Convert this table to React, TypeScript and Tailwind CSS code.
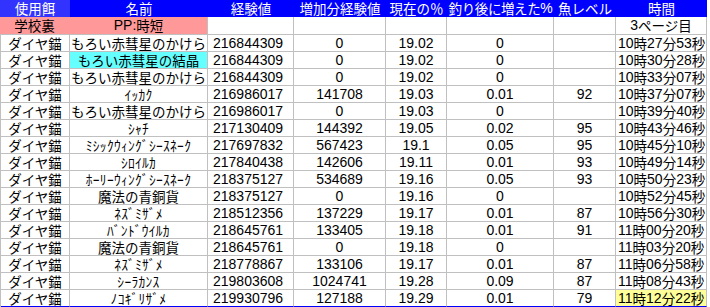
import React from "react";

const RE = /([\u3000-\u30ff\u3400-\u9fff\uff00-\uffef]+)/;
const HW = /^[\uff61-\uff9f]+$/;

function Txt({ s }: { s: string }) {
  const parts = s.split(RE).filter((p) => p !== "");
  return (
    <>
      {parts.map((p, i) =>
        RE.test(p) ? (
          <span
            key={i}
            className={`inline-block h-[15px] leading-[15px] font-['Noto_Sans_CJK_JP',sans-serif] ${
              HW.test(p) ? "text-[13.5px] tracking-[0.3px]" : "text-[13.5px]"
            }`}
          >
            {p}
          </span>
        ) : (
          <span
            key={i}
            className="inline-block h-[15px] leading-[15px] font-['Liberation_Sans','Noto_Sans_CJK_JP',sans-serif] text-[14px]"
          >
            {p}
          </span>
        )
      )}
    </>
  );
}

type Row = {
  name: string;
  exp: string;
  inc: string;
  pct: string;
  up: string;
  lvl: string;
  time: string;
  cyan?: boolean;
  yellow?: boolean;
};

const rows: Row[] = [
  { name: "もろい赤彗星のかけら", exp: "216844309", inc: "0", pct: "19.02", up: "0", lvl: "", time: "10時27分53秒" },
  { name: "もろい赤彗星の結晶", exp: "216844309", inc: "0", pct: "19.02", up: "0", lvl: "", time: "10時30分28秒", cyan: true },
  { name: "もろい赤彗星のかけら", exp: "216844309", inc: "0", pct: "19.02", up: "0", lvl: "", time: "10時33分07秒" },
  { name: "ｲｯｶｸ", exp: "216986017", inc: "141708", pct: "19.03", up: "0.01", lvl: "92", time: "10時37分07秒" },
  { name: "もろい赤彗星のかけら", exp: "216986017", inc: "0", pct: "19.03", up: "0", lvl: "", time: "10時39分40秒" },
  { name: "ｼｬﾁ", exp: "217130409", inc: "144392", pct: "19.05", up: "0.02", lvl: "95", time: "10時43分46秒" },
  { name: "ﾐｼｯｸｳｨﾝｸﾞｼｰｽﾈｰｸ", exp: "217697832", inc: "567423", pct: "19.1", up: "0.05", lvl: "95", time: "10時45分10秒" },
  { name: "ｼﾛｲﾙｶ", exp: "217840438", inc: "142606", pct: "19.11", up: "0.01", lvl: "93", time: "10時49分14秒" },
  { name: "ﾎｰﾘｰｳｨﾝｸﾞｼｰｽﾈｰｸ", exp: "218375127", inc: "534689", pct: "19.16", up: "0.05", lvl: "93", time: "10時50分23秒" },
  { name: "魔法の青銅貨", exp: "218375127", inc: "0", pct: "19.16", up: "0", lvl: "", time: "10時52分45秒" },
  { name: "ﾈｽﾞﾐｻﾞﾒ", exp: "218512356", inc: "137229", pct: "19.17", up: "0.01", lvl: "87", time: "10時56分30秒" },
  { name: "ﾊﾞﾝﾄﾞｳｲﾙｶ", exp: "218645761", inc: "133405", pct: "19.18", up: "0.01", lvl: "91", time: "11時00分20秒" },
  { name: "魔法の青銅貨", exp: "218645761", inc: "0", pct: "19.18", up: "0", lvl: "", time: "11時03分20秒" },
  { name: "ﾈｽﾞﾐｻﾞﾒ", exp: "218778867", inc: "133106", pct: "19.17", up: "0.01", lvl: "87", time: "11時06分58秒" },
  { name: "ｼｰﾗｶﾝｽ", exp: "219803608", inc: "1024741", pct: "19.28", up: "0.09", lvl: "87", time: "11時08分43秒" },
  { name: "ﾉｺｷﾞﾘｻﾞﾒ", exp: "219930796", inc: "127188", pct: "19.29", up: "0.01", lvl: "79", time: "11時12分22秒", yellow: true },
];

const cell =
  "box-border h-full flex items-center whitespace-nowrap overflow-hidden border-r border-b border-[#c0c0c0]";

export default function App() {
  return (
    <div className="w-[710px] h-[307px] bg-white text-black overflow-hidden">
      {/* header */}
      <div className="flex h-[17px] text-white">
        <div className="w-[70px] h-full bg-[#3333ff] flex items-center justify-center">
          <Txt s="使用餌" />
        </div>
        <div className="w-[637px] h-full bg-[#0000ff] flex items-center">
          <div className="w-[138px] flex justify-center"><Txt s="名前" /></div>
          <div className="w-[86px] flex justify-center"><Txt s="経験値" /></div>
          <div className="w-[92px] flex justify-center"><Txt s="増加分経験値" /></div>
          <div className="w-[61px] flex justify-center"><Txt s="現在の％" /></div>
          <div className="w-[107px] flex justify-center whitespace-nowrap tracking-[-0.4px]"><Txt s="釣り後に増えた%" /></div>
          <div className="w-[62px] flex justify-center"><Txt s="魚レベル" /></div>
          <div className="w-[91px] flex justify-center"><Txt s="時間" /></div>
        </div>
      </div>

      {/* school row */}
      <div className="flex h-[18px]">
        <div className={`${cell} w-[70px] bg-[#ff9999] border-r-[#ff9999] justify-center`}>
          <Txt s="学校裏" />
        </div>
        <div className={`${cell} w-[138px] bg-[#ff9999] justify-center`}>
          <Txt s="PP:時短" />
        </div>
        <div className={`${cell} w-[86px]`} />
        <div className={`${cell} w-[92px]`} />
        <div className={`${cell} w-[61px]`} />
        <div className={`${cell} w-[107px]`} />
        <div className={`${cell} w-[62px]`} />
        <div className={`${cell} w-[91px] justify-center`}>
          <Txt s="3ページ目" />
        </div>
      </div>

      {/* data rows */}
      {rows.map((r, i) => {
        const last = i === rows.length - 1;
        const bb = last ? "border-b-[#0000ff]" : "";
        return (
          <div key={i} className="flex h-[17px] border-l border-[#c0c0c0] w-[707px]">
            <div className={`${cell} ${bb} w-[69px] justify-center`}>
              <Txt s="ダイヤ錨" />
            </div>
            <div className={`${cell} ${bb} w-[138px] justify-center ${r.cyan ? "bg-[#66ffff]" : ""}`}>
              <Txt s={r.name} />
            </div>
            <div className={`${cell} ${bb} w-[86px] pl-[5px]`}>
              <Txt s={r.exp} />
            </div>
            <div className={`${cell} ${bb} w-[92px] justify-center`}>
              <Txt s={r.inc} />
            </div>
            <div className={`${cell} ${bb} w-[61px] justify-center`}>
              <Txt s={r.pct} />
            </div>
            <div className={`${cell} ${bb} w-[107px] justify-center`}>
              <Txt s={r.up} />
            </div>
            <div className={`${cell} ${bb} w-[62px] justify-center`}>
              <Txt s={r.lvl} />
            </div>
            <div className={`${cell} ${bb} w-[91px] pl-[2px] ${r.yellow ? "bg-[#ffff99]" : ""}`}>
              <Txt s={r.time} />
            </div>
          </div>
        );
      })}
    </div>
  );
}
